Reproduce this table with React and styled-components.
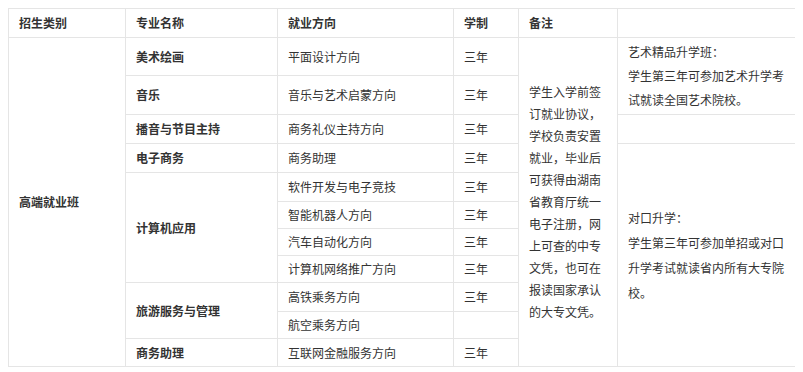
import React from 'react';
import styled, { createGlobalStyle } from 'styled-components';

const GlobalStyle = createGlobalStyle`
	body {
		margin: 8px;
		background: #fff;
		font-family: "Noto Sans CJK SC", "Microsoft YaHei", sans-serif;
		color: #333;
	}
`;

const Table = styled.table`
	width: 790px;
	border-collapse: collapse;
	table-layout: fixed;
	font-size: 12px;
	line-height: 18px;
`;

const Col = styled.col`
	width: ${p => p.$w}px;
`;

const Row = styled.tr`
	height: ${p => p.$h}px;
`;

const Cell = styled.td`
	border: 1px solid #e5e5e5;
	padding: 0 10px;
	vertical-align: middle;
	font-weight: ${p => (p.$bold ? 700 : 400)};
	line-height: ${p => p.$lh || 18}px;
	white-space: ${p => (p.$wrap ? 'normal' : 'nowrap')};
	word-break: break-all;
`;

const Para = styled.div`
	margin: 0;
`;

const cols = [117, 152, 176, 65, 99, 181];

const remark = '学生入学前签订就业协议，学校负责安置就业，毕业后可获得由湖南省教育厅统一电子注册，网上可查的中专文凭，也可在报读国家承认的大专文凭。';

const App = () => (
	<>
		<GlobalStyle />
		<Table>
			<colgroup>
				{cols.map((w, i) => (
					<Col key={i} $w={w} />
				))}
			</colgroup>
			<tbody>
				<Row $h={29}>
					<Cell $bold>招生类别</Cell>
					<Cell $bold>专业名称</Cell>
					<Cell $bold>就业方向</Cell>
					<Cell $bold>学制</Cell>
					<Cell $bold>备注</Cell>
					<Cell />
				</Row>
				<Row $h={38}>
					<Cell $bold rowSpan={11}>高端就业班</Cell>
					<Cell $bold>美术绘画</Cell>
					<Cell>平面设计方向</Cell>
					<Cell>三年</Cell>
					<Cell rowSpan={11} $wrap $lh={22}>{remark}</Cell>
					<Cell rowSpan={2} $wrap $lh={24}>
						<Para>艺术精品升学班：</Para>
						<Para>学生第三年可参加艺术升学考试就读全国艺术院校。</Para>
					</Cell>
				</Row>
				<Row $h={39}>
					<Cell $bold>音乐</Cell>
					<Cell>音乐与艺术启蒙方向</Cell>
					<Cell>三年</Cell>
				</Row>
				<Row $h={29}>
					<Cell $bold>播音与节目主持</Cell>
					<Cell>商务礼仪主持方向</Cell>
					<Cell>三年</Cell>
					<Cell />
				</Row>
				<Row $h={29}>
					<Cell $bold>电子商务</Cell>
					<Cell>商务助理</Cell>
					<Cell>三年</Cell>
					<Cell rowSpan={8} $wrap $lh={25}>
						<Para>对口升学：</Para>
						<Para>学生第三年可参加单招或对口升学考试就读省内所有大专院校。</Para>
					</Cell>
				</Row>
				<Row $h={29}>
					<Cell $bold rowSpan={4}>计算机应用</Cell>
					<Cell>软件开发与电子竞技</Cell>
					<Cell>三年</Cell>
				</Row>
				<Row $h={27}>
					<Cell>智能机器人方向</Cell>
					<Cell>三年</Cell>
				</Row>
				<Row $h={27}>
					<Cell>汽车自动化方向</Cell>
					<Cell>三年</Cell>
				</Row>
				<Row $h={27}>
					<Cell>计算机网络推广方向</Cell>
					<Cell>三年</Cell>
				</Row>
				<Row $h={29}>
					<Cell $bold rowSpan={2}>旅游服务与管理</Cell>
					<Cell>高铁乘务方向</Cell>
					<Cell>三年</Cell>
				</Row>
				<Row $h={27}>
					<Cell>航空乘务方向</Cell>
					<Cell />
				</Row>
				<Row $h={28}>
					<Cell $bold>商务助理</Cell>
					<Cell>互联网金融服务方向</Cell>
					<Cell>三年</Cell>
				</Row>
			</tbody>
		</Table>
	</>
);

export default App;
